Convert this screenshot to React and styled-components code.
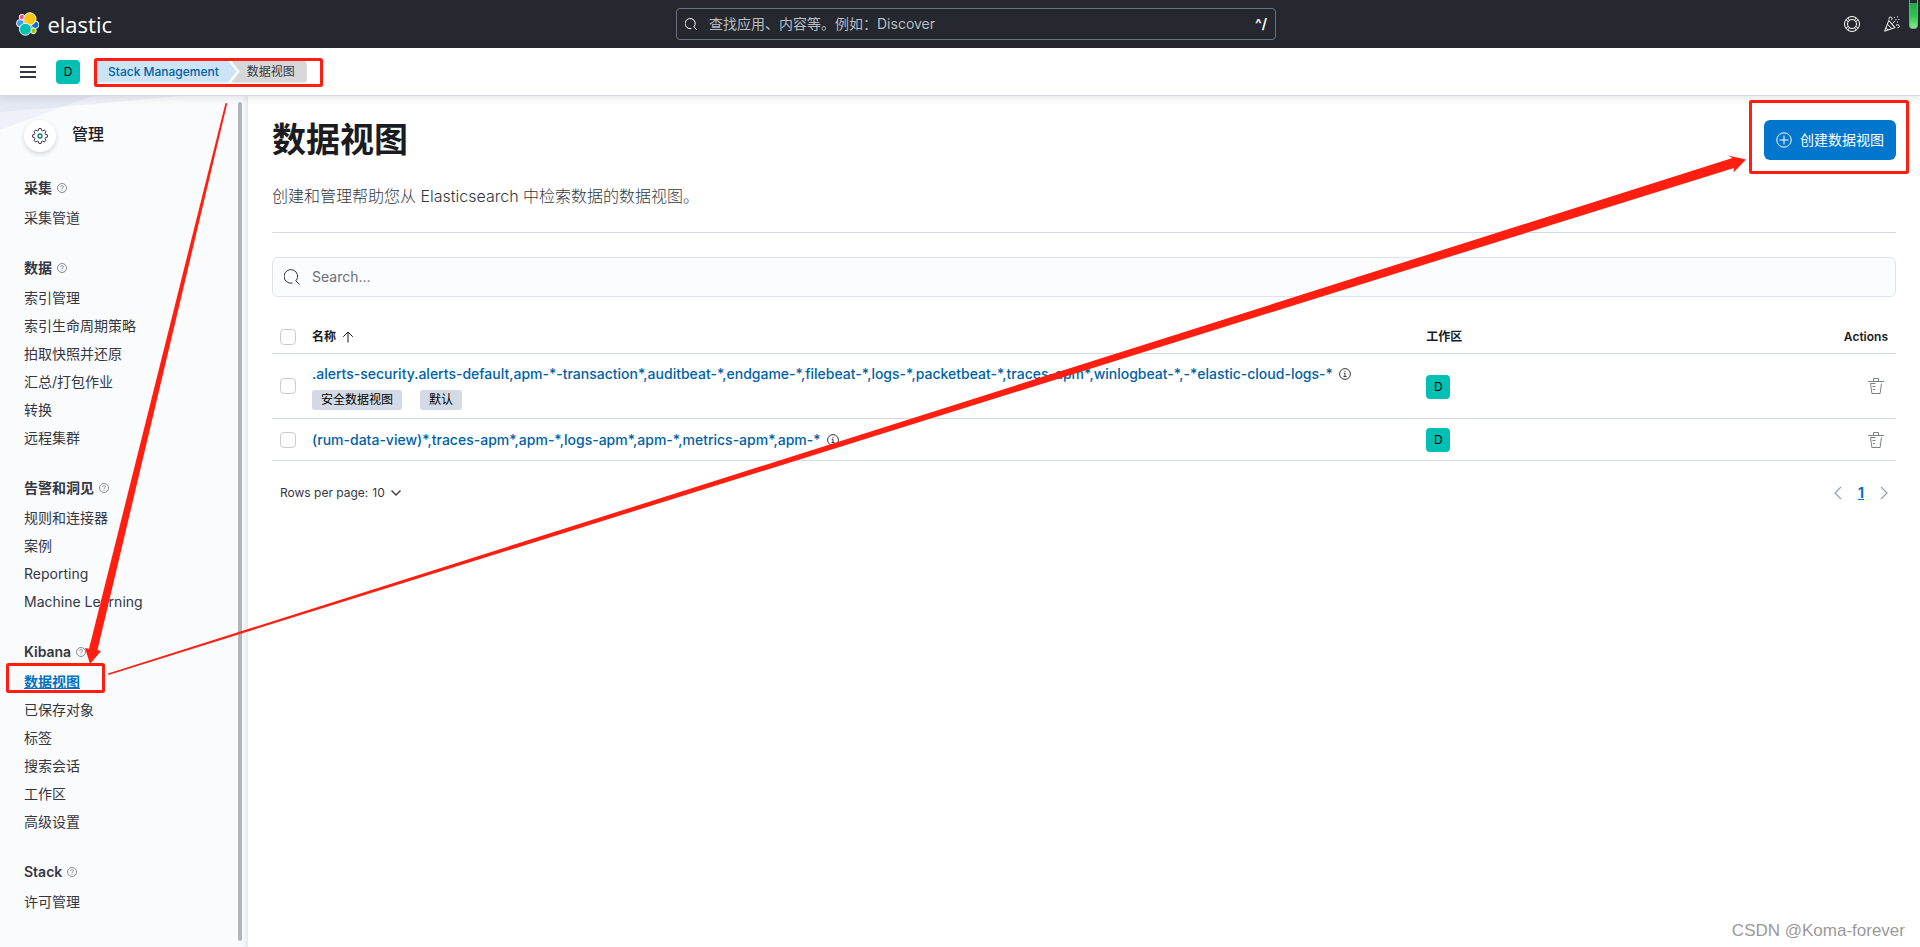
import React, { useState } from 'react';
import styled, { createGlobalStyle } from 'styled-components';

const GlobalStyle = createGlobalStyle`
    * {
        box-sizing: border-box;
    }

    body {
        margin: 0;
        background-color: #ffffff;
        color: #343741;
        font-family: Inter, 'Noto Sans CJK SC', sans-serif;
        font-size: 14px;
        line-height: 24px;
    }

    button,
    input,
    select {
        font-family: inherit;
    }
`;

const Page = styled.div`
    position: relative;
    display: flex;
    flex-direction: column;
    min-height: 100vh;
    overflow: hidden;
`;

/* Header */

const TopBar = styled.header`
    display: flex;
    align-items: center;
    justify-content: space-between;
    height: 48px;
    padding: 0 8px;
    background-color: #25282f;
`;

const LogoLink = styled.a`
    display: flex;
    align-items: center;
    gap: 8px;
    width: 112px;
    padding: 0 8px;
    color: #ffffff;
    font-family: 'Open Sans', sans-serif;
    font-size: 22px;
    line-height: 40px;
    text-decoration: none;
`;

const GlobalSearch = styled.label`
    display: flex;
    align-items: center;
    gap: 12px;
    width: 600px;
    height: 32px;
    padding: 0 8px;
    border: 1px solid #69707d;
    border-radius: 4px;
    color: #ffffff;
`;

const GlobalSearchInput = styled.input`
    flex: 1;
    min-width: 0;
    padding: 0;
    border: none;
    outline: none;
    background: transparent;
    color: #ffffff;
    font-size: 14px;
    line-height: 20px;

    &::placeholder {
        color: #b8bcc4;
        opacity: 1;
    }
`;

const Shortcut = styled.span`
    font-size: 14px;
    font-weight: 600;
`;

const HeaderActions = styled.div`
    display: flex;
`;

const IconButton = styled.button`
    display: flex;
    align-items: center;
    justify-content: center;
    width: ${props => props.$size || 24}px;
    height: ${props => props.$size || 24}px;
    padding: 0;
    border: none;
    background: transparent;
    color: ${props => props.$color || '#343741'};
    cursor: pointer;

    svg {
        flex-shrink: 0;
    }
`;

const NavBar = styled.div`
    position: relative;
    z-index: 2;
    display: flex;
    align-items: center;
    gap: 16px;
    height: 48px;
    padding: 0 16px;
    border-bottom: 1px solid #d3dae6;
    background-color: #ffffff;
    box-shadow: 0 2px 8px rgba(0, 0, 0, 0.1);
`;

const Avatar = styled.span`
    display: inline-flex;
    align-items: center;
    justify-content: center;
    width: 24px;
    height: 24px;
    border-radius: 4px;
    background-color: #00bfb3;
    color: #000000;
    font-size: 12px;
    vertical-align: middle;
`;

const Breadcrumbs = styled.nav`
    display: flex;
    font-size: 12px;
    line-height: 22px;
`;

const CrumbLink = styled.a`
    padding: 0 18px 0 12px;
    border-radius: 4px 0 0 4px;
    background-color: #cce4f5;
    clip-path: polygon(0 0, calc(100% - 9px) 0, 100% 50%, calc(100% - 9px) 100%, 0 100%);
    color: #0061a6;
    font-weight: 500;
    text-decoration: none;
`;

const CrumbCurrent = styled.span`
    margin-left: -6px;
    padding: 0 12px 0 16px;
    border-radius: 0 4px 4px 0;
    background-color: #d6d7d9;
    clip-path: polygon(0 0, 100% 0, 100% 100%, 0 100%, 9px 50%);
    color: #343741;
`;

/* Side navigation */

const Body = styled.div`
    display: flex;
    flex: 1;
`;

const Sidebar = styled.aside`
    position: relative;
    display: flex;
    flex-shrink: 0;
    width: 248px;
    padding: 6px;
    background: linear-gradient(to left, #e9eaec, #fafbfd 6px);
`;

const SidebarArt = styled.svg`
    position: absolute;
    top: 0;
    left: 0;
`;

const SidebarContent = styled.div`
    position: relative;
    flex: 1;
    padding: 18px 18px 0;
`;

const ScrollThumb = styled.div`
    width: 4px;
    border-radius: 2px;
    background-color: #b0b5ba;
`;

const SolutionTitle = styled.div`
    display: flex;
    gap: 16px;
    color: #1a1c21;
    font-size: 16px;
    font-weight: 500;
    line-height: 28px;
`;

const SolutionIcon = styled.span`
    display: flex;
    align-items: center;
    justify-content: center;
    width: 32px;
    height: 32px;
    border-radius: 50%;
    background-color: #ffffff;
    box-shadow: 0 2px 5px rgba(0, 0, 0, 0.16);
`;

const NavGroup = styled.section`
    margin-top: 24px;
`;

const NavGroupTitle = styled.h2`
    display: flex;
    align-items: center;
    gap: 5px;
    margin: 0 0 4px;
    color: #343741;
    font-size: 14px;
    font-weight: 600;
    line-height: 24px;
`;

const NavItem = styled.a`
    display: block;
    color: ${props => (props.$active ? '#0071c2' : '#343741')};
    font-weight: ${props => (props.$active ? 600 : 400)};
    line-height: 28px;
    text-decoration: ${props => (props.$active ? 'underline' : 'none')};
`;

/* Main panel */

const Main = styled.main`
    flex: 1;
    min-width: 0;
    padding: 24px;
`;

const PageHeader = styled.div`
    display: flex;
    align-items: center;
    justify-content: space-between;
    height: 40px;
`;

const PageTitle = styled.h1`
    margin: 0;
    color: #1a1c21;
    font-size: 34px;
    font-weight: 700;
    line-height: 42px;
`;

const CreateButton = styled.button`
    display: flex;
    align-items: center;
    gap: 8px;
    height: 40px;
    padding: 0 12px;
    border: none;
    border-radius: 6px;
    background-color: #0077cc;
    color: #ffffff;
    font-size: 14px;
    line-height: 20px;
    cursor: pointer;
`;

const Description = styled.p`
    margin: 24px 0;
    font-size: 16px;
    font-weight: 300;
`;

const Divider = styled.hr`
    height: 1px;
    margin: 0 0 24px;
    border: none;
    background-color: #d3dae6;
`;

const SearchField = styled.label`
    display: flex;
    align-items: center;
    gap: 12px;
    height: 40px;
    margin-bottom: 24px;
    padding: 0 11px;
    border: 1px solid #dfe3ee;
    border-radius: 6px;
    background-color: #fbfcfd;
`;

const SearchInput = styled.input`
    flex: 1;
    padding: 0;
    border: none;
    outline: none;
    background: transparent;
    font-size: 14px;
    line-height: 20px;

    &::placeholder {
        color: #69707d;
        opacity: 1;
    }
`;

const Table = styled.table`
    width: 100%;
    border-spacing: 0;
    table-layout: fixed;
`;

const HeadCell = styled.th`
    height: 33px;
    padding: 0 8px;
    border-bottom: 1px solid #d3dae6;
    color: #1a1c21;
    font-size: 12px;
    font-weight: 600;
    line-height: 24px;
    text-align: ${props => props.$align || 'left'};
    width: ${props => props.$width || 'auto'};
`;

const SortLabel = styled.span`
    display: flex;
    align-items: center;
    gap: 6px;
`;

const Cell = styled.td`
    padding: 8px;
    border-bottom: 1px solid #d3dae6;
`;

const ActionSlot = styled.div`
    display: flex;
    justify-content: flex-end;
`;

const Checkbox = styled.input`
    display: block;
    appearance: none;
    width: 16px;
    height: 16px;
    margin: 0;
    border: 1px solid #c9cbcd;
    border-radius: 4px;
    background-color: #ffffff;
`;

const NameLine = styled.div`
    display: flex;
    align-items: center;
    gap: 6px;
    white-space: nowrap;
`;

const ViewLink = styled.a`
    color: #0061a6;
    font-weight: 500;
    text-decoration: none;
`;

const Badges = styled.div`
    display: flex;
    gap: 18px;
    margin-top: 4px;
`;

const Badge = styled.span`
    padding: 0 9px;
    border-radius: 3px;
    background-color: #d3dae6;
    color: #000000;
    font-size: 12px;
    line-height: 20px;
`;

const Pager = styled.div`
    display: flex;
    align-items: center;
    justify-content: space-between;
    margin-top: 20px;
    padding: 0 8px;
`;

const PageSize = styled.label`
    display: flex;
    align-items: center;
    gap: 4px;
    font-size: 12px;
    line-height: 24px;
`;

const PageSizeSelect = styled.select`
    appearance: none;
    padding: 0;
    border: none;
    outline: none;
    background: transparent;
    color: #343741;
    font-size: 12px;
    line-height: 24px;
`;

const Pages = styled.div`
    display: flex;
    align-items: center;
    gap: 16px;
`;

const PageNumber = styled.a`
    color: #0071c2;
    font-weight: 700;
    text-decoration: underline;
`;

/* Overlays */

const Markup = styled.svg`
    position: absolute;
    top: 0;
    left: 0;
    z-index: 5;
    pointer-events: none;
`;

const Battery = styled.div`
    position: absolute;
    top: 0;
    right: 2px;
    z-index: 4;
    width: 9px;
    height: 29px;
    border: 1px solid #8f9a92;
    border-top: none;
    border-radius: 0 0 4px 4px;
    background: linear-gradient(#25282f 3px, #1faa4d 3px, #2fc04f 15px, #7df08a);
`;

const Watermark = styled.div`
    position: absolute;
    right: 15px;
    bottom: 4px;
    color: #999999;
    font-family: 'Liberation Sans', sans-serif;
    font-size: 17px;
`;

const navGroups = [
    { title: '采集', items: ['采集管道'] },
    { title: '数据', items: ['索引管理', '索引生命周期策略', '拍取快照并还原', '汇总/打包作业', '转换', '远程集群'] },
    { title: '告警和洞见', items: ['规则和连接器', '案例', 'Reporting', 'Machine Learning'] },
    { title: 'Kibana', items: ['数据视图', '已保存对象', '标签', '搜索会话', '工作区', '高级设置'] },
    { title: 'Stack', items: ['许可管理'] },
];

const dataViews = [
    {
        name: '.alerts-security.alerts-default,apm-*-transaction*,auditbeat-*,endgame-*,filebeat-*,logs-*,packetbeat-*,traces-apm*,winlogbeat-*,-*elastic-cloud-logs-*',
        tags: ['安全数据视图', '默认'],
    },
    {
        name: '(rum-data-view)*,traces-apm*,apm-*,logs-apm*,apm-*,metrics-apm*,apm-*',
        tags: [],
    },
];

const ElasticLogo = () => (
    <svg width="24" height="24" viewBox="0 0 24 24">
        <g stroke="#ffffff" strokeWidth="1">
            <circle cx="6.2" cy="5" r="2.9" fill="#f04e98" />
            <circle cx="4.4" cy="11.3" r="3.9" fill="#36a2ef" />
            <circle cx="19.6" cy="12.8" r="3.9" fill="#0077cc" />
            <circle cx="17.8" cy="19" r="2.9" fill="#93c90e" />
            <circle cx="14.2" cy="6.8" r="6.3" fill="#fec514" />
            <circle cx="9.6" cy="17.4" r="6.1" fill="#00bfb3" />
        </g>
    </svg>
);

const SearchIcon = ({ size = 16 }) => (
    <svg width={size} height={size} viewBox="0 0 16 16" fill="none" stroke="currentColor" strokeWidth={16 / size}>
        <path d="M8.500 14A6.800 6.800 0 1 1 12.200 11.600M11.500 11.500L15.600 15.600" />
    </svg>
);

const HelpRing = () => (
    <svg width="16" height="16" viewBox="0 0 16 16" fill="none" stroke="currentColor">
        <circle cx="8" cy="8" r="7.5" />
        <circle cx="8" cy="8" r="4.5" />
        <path d="M2.2 4.2l2.4 1.4M4.2 2.2l1.4 2.4M13.8 4.2l-2.4 1.4M11.8 2.2l-1.4 2.4M2.2 11.8l2.4-1.4M4.2 13.8l1.4-2.4M13.8 11.8l-2.4-1.4M11.8 13.8l-1.4-2.4" />
    </svg>
);

const CheerIcon = () => (
    <svg width="16" height="16" viewBox="0 0 16 16" fill="none" stroke="currentColor">
        <path d="M4.8 4.5L.6 15.2l10.4-3.6zM3.4 8.2l4.4 4.4M2 11.8l2.3 2.3M5 4.8l5.9 6.6" />
        <path d="M5 3.5C4.5 1.5 6 .5 7.3 1.2c1 .6.8 2 .2 3M8.5 7.5l2.8-2.8M12 9.2c1.8-1 3.4-.3 3.2 1.4-.1 1-.9 1.4-1.7 1.2" />
        <path d="M10 1.5h1M13 .8h1M14.5 3.5h1M11.5 3.5h1M13 6h1" />
    </svg>
);

const MenuIcon = () => (
    <svg width="16" height="12" viewBox="0 0 16 12" fill="currentColor">
        <path d="M0 0h16v2H0zM0 5h16v2H0zM0 10h16v2H0z" />
    </svg>
);

const GearIcon = () => (
    <svg width="16" height="16" viewBox="0 0 16 16" fill="none">
        <path
            d="M6.8.6h2.4l.4 1.9 1.1.5 1.7-1 1.6 1.6-1 1.7.5 1.1 1.9.4v2.4l-1.9.4-.5 1.1 1 1.7-1.6 1.6-1.7-1-1.1.5-.4 1.9H6.8l-.4-1.9-1.1-.5-1.7 1L2 12.4l1-1.7-.5-1.1-1.9-.4V6.8l1.9-.4L3 5.3l-1-1.7L3.6 2l1.7 1 1.1-.5z"
            stroke="#343741"
        />
        <circle cx="8" cy="8" r="2" stroke="#017d73" strokeWidth="1.300" />
    </svg>
);

const QuestionIcon = () => (
    <svg width="10" height="10" viewBox="0 0 10 10" fill="none" stroke="#69707d">
        <circle cx="5" cy="5" r="4.5" strokeWidth="0.8" />
        <path d="M3.6 4C3.6 2.2 6.4 2.2 6.4 3.9 6.4 4.9 5 4.8 5 6M5 6.8v.9" strokeWidth="0.8" />
    </svg>
);

const InfoIcon = () => (
    <svg width="12" height="12" viewBox="0 0 12 12" fill="none" stroke="#343741">
        <circle cx="6" cy="6" r="5.4" />
        <path d="M4.8 5.2H6v3.3M4.5 8.5h3M5.5 3.3h1" />
    </svg>
);

const PlusCircle = () => (
    <svg width="16" height="16" viewBox="0 0 16 16" fill="none" stroke="currentColor">
        <circle cx="8" cy="8" r="7.2" />
        <path d="M8 3.5v9M3.5 8h9" />
    </svg>
);

const SortUp = () => (
    <svg width="12" height="12" viewBox="0 0 12 12" fill="none" stroke="currentColor">
        <path d="M6 11.5V1M1.2 5.8L6 1l4.8 4.8" />
    </svg>
);

const TrashIcon = () => (
    <svg width="16" height="16" viewBox="0 0 16 16" fill="none" stroke="currentColor">
        <path d="M0 3.5h16M5.5 3.5v-3h5v3M2.5 5.5l1.4 10h8.2l1.4-10M2.5 5.5h5M4.5 8.5h3M5 11.5h2" />
    </svg>
);

const Chevron = ({ d, width, height }) => (
    <svg width={width} height={height} viewBox={`0 0 ${width} ${height}`} fill="none" stroke="currentColor" strokeWidth="1.3">
        <path d={d} />
    </svg>
);

const App = () => {
    const [query, setQuery] = useState('');

    return (
        <Page>
            <GlobalStyle />

            <TopBar>
                <LogoLink href="#" aria-label="elastic">
                    <ElasticLogo />
                    elastic
                </LogoLink>
                <GlobalSearch>
                    <SearchIcon size={12} />
                    <GlobalSearchInput type="text" placeholder="查找应用、内容等。例如：Discover" />
                    <Shortcut>^/</Shortcut>
                </GlobalSearch>
                <HeaderActions>
                    <IconButton $size={40} $color="#ffffff" aria-label="Help"><HelpRing /></IconButton>
                    <IconButton $size={40} $color="#ffffff" aria-label="News"><CheerIcon /></IconButton>
                </HeaderActions>
            </TopBar>

            <NavBar>
                <IconButton aria-label="Menu"><MenuIcon /></IconButton>
                <Avatar>D</Avatar>
                <Breadcrumbs>
                    <CrumbLink href="#">Stack Management</CrumbLink>
                    <CrumbCurrent>数据视图</CrumbCurrent>
                </Breadcrumbs>
            </NavBar>

            <Body>
                <Sidebar>
                    <SidebarArt width="190" height="36" viewBox="0 0 190 36">
                        <path d="M0 0h180L62 11 0 34z" fill="#eef1f7" />
                        <path d="M0 0h93L62 11 0 16z" fill="#e4e8f1" />
                    </SidebarArt>
                    <SidebarContent>
                        <SolutionTitle>
                            <SolutionIcon><GearIcon /></SolutionIcon>
                            管理
                        </SolutionTitle>
                        {navGroups.map(group => (
                            <NavGroup key={group.title}>
                                <NavGroupTitle>
                                    {group.title}
                                    <QuestionIcon />
                                </NavGroupTitle>
                                {group.items.map(item => (
                                    <NavItem key={item} href="#" $active={item === '数据视图'}>{item}</NavItem>
                                ))}
                            </NavGroup>
                        ))}
                    </SidebarContent>
                    <ScrollThumb />
                </Sidebar>

                <Main>
                    <PageHeader>
                        <PageTitle>数据视图</PageTitle>
                        <CreateButton>
                            <PlusCircle />
                            创建数据视图
                        </CreateButton>
                    </PageHeader>
                    <Description>创建和管理帮助您从 Elasticsearch 中检索数据的数据视图。</Description>
                    <Divider />

                    <SearchField>
                        <SearchIcon />
                        <SearchInput
                            type="text"
                            placeholder="Search..."
                            value={query}
                            onChange={e => setQuery(e.target.value)}
                        />
                    </SearchField>

                    <Table>
                        <thead>
                            <tr>
                                <HeadCell $width="32px"><Checkbox type="checkbox" aria-label="Select all" /></HeadCell>
                                <HeadCell><SortLabel>名称 <SortUp /></SortLabel></HeadCell>
                                <HeadCell $width="24%">工作区</HeadCell>
                                <HeadCell $width="88px" $align="right">Actions</HeadCell>
                            </tr>
                        </thead>
                        <tbody>
                            {dataViews.map(view => (
                                <tr key={view.name}>
                                    <Cell><Checkbox type="checkbox" aria-label={view.name} /></Cell>
                                    <Cell>
                                        <NameLine>
                                            <ViewLink href="#">{view.name}</ViewLink>
                                            <InfoIcon />
                                        </NameLine>
                                        {view.tags.length > 0 && (
                                            <Badges>
                                                {view.tags.map(tag => <Badge key={tag}>{tag}</Badge>)}
                                            </Badges>
                                        )}
                                    </Cell>
                                    <Cell><Avatar>D</Avatar></Cell>
                                    <Cell>
                                        <ActionSlot>
                                            <IconButton $color="#7b7f87" aria-label="Delete"><TrashIcon /></IconButton>
                                        </ActionSlot>
                                    </Cell>
                                </tr>
                            ))}
                        </tbody>
                    </Table>

                    <Pager>
                        <PageSize>
                            Rows per page:
                            <PageSizeSelect defaultValue="10">
                                <option>10</option>
                                <option>25</option>
                                <option>50</option>
                            </PageSizeSelect>
                            <Chevron width={10} height={6} d="M.5.5L5 5 9.5.5" />
                        </PageSize>
                        <Pages>
                            <IconButton $size={8} $color="#98a2b3" aria-label="Previous page">
                                <Chevron width={8} height={14} d="M7 1L1 7l6 6" />
                            </IconButton>
                            <PageNumber href="#">1</PageNumber>
                            <IconButton $size={8} $color="#98a2b3" aria-label="Next page">
                                <Chevron width={8} height={14} d="M1 1l6 6-6 6" />
                            </IconButton>
                        </Pages>
                    </Pager>
                </Main>
            </Body>

            <Battery />
            <Watermark>CSDN @Koma-forever</Watermark>

            <Markup width="1920" height="947" viewBox="0 0 1920 947">
                <g fill="none" stroke="#ff1e10" strokeWidth="3">
                    <rect x="95.5" y="59.5" width="226" height="26" rx="1" />
                    <rect x="7.5" y="664.5" width="96" height="27" rx="1" />
                    <rect x="1750.5" y="101.5" width="157" height="71" rx="1" />
                </g>
                <g fill="#ff1e10">
                    <path d="M225.5 103l1.7.4L97.5 650l3.500 1-11 13-5-16 4 .8z" />
                    <path d="M108 673.5l.5 1.5L1734 168l-.5 4.5L1746 159.5l-18-4 4.500 2.500z" />
                </g>
            </Markup>
        </Page>
    );
};

export default App;
